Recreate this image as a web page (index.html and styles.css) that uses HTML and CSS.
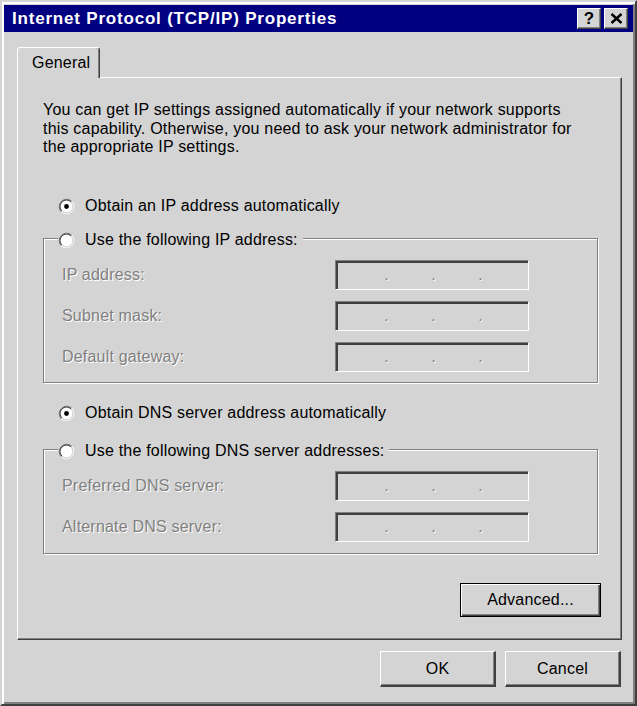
FILE: index.html
```html
<!DOCTYPE html>
<html lang="en">
<head>
<meta charset="utf-8">
<title>Internet Protocol (TCP/IP) Properties</title>
<link rel="stylesheet" href="styles.css">
</head>
<body>
<div class="window">
  <div class="titlebar">
    <span class="title">Internet Protocol (TCP/IP) Properties</span>
    <div class="caption-buttons">
      <span class="cap-btn help">?</span>
      <span class="cap-btn close"><svg width="13" height="11" viewBox="0 0 13 11"><path d="M1.5 1 L11.5 10 M11.5 1 L1.5 10" stroke="#000" stroke-width="2.4" fill="none"/></svg></span>
    </div>
  </div>

  <div class="tabs"><div class="tab">General</div></div>

  <div class="panel">
    <p class="desc">You can get IP settings assigned automatically if your network supports<br>this capability. Otherwise, you need to ask your network administrator for<br>the appropriate IP settings.</p>

    <div class="radio-row first">
      <svg class="radio" width="17" height="17" viewBox="0 0 17 17"><circle cx="8.5" cy="8.5" r="6" fill="#fff"/><path d="M3.2 13.8 A7.5 7.5 0 0 1 13.8 3.2" stroke="#808080" fill="none"/><path d="M13.8 3.2 A7.5 7.5 0 0 1 3.2 13.8" stroke="#fff" fill="none"/><path d="M3.9 13.1 A6.5 6.5 0 0 1 13.1 3.9" stroke="#404040" fill="none"/><path d="M13.1 3.9 A6.5 6.5 0 0 1 3.9 13.1" stroke="#d4d4d4" fill="none"/><circle cx="8.5" cy="8.5" r="2.4" fill="#000"/></svg>
      <span>Obtain an IP address automatically</span>
    </div>

    <fieldset class="group ip">
      <legend class="legend">
        <svg class="radio" width="17" height="17" viewBox="0 0 17 17"><circle cx="8.5" cy="8.5" r="6" fill="#fff"/><path d="M3.2 13.8 A7.5 7.5 0 0 1 13.8 3.2" stroke="#808080" fill="none"/><path d="M13.8 3.2 A7.5 7.5 0 0 1 3.2 13.8" stroke="#fff" fill="none"/><path d="M3.9 13.1 A6.5 6.5 0 0 1 13.1 3.9" stroke="#404040" fill="none"/><path d="M13.1 3.9 A6.5 6.5 0 0 1 3.9 13.1" stroke="#d4d4d4" fill="none"/></svg>
        <span>Use the following IP address:</span>
      </legend>
      <div class="fields">
        <span class="label">IP address:</span>
        <div class="ipbox"><span class="dot">.</span><span class="dot">.</span><span class="dot">.</span></div>
        <span class="label">Subnet mask:</span>
        <div class="ipbox"><span class="dot">.</span><span class="dot">.</span><span class="dot">.</span></div>
        <span class="label">Default gateway:</span>
        <div class="ipbox"><span class="dot">.</span><span class="dot">.</span><span class="dot">.</span></div>
      </div>
    </fieldset>

    <div class="radio-row second">
      <svg class="radio" width="17" height="17" viewBox="0 0 17 17"><circle cx="8.5" cy="8.5" r="6" fill="#fff"/><path d="M3.2 13.8 A7.5 7.5 0 0 1 13.8 3.2" stroke="#808080" fill="none"/><path d="M13.8 3.2 A7.5 7.5 0 0 1 3.2 13.8" stroke="#fff" fill="none"/><path d="M3.9 13.1 A6.5 6.5 0 0 1 13.1 3.9" stroke="#404040" fill="none"/><path d="M13.1 3.9 A6.5 6.5 0 0 1 3.9 13.1" stroke="#d4d4d4" fill="none"/><circle cx="8.5" cy="8.5" r="2.4" fill="#000"/></svg>
      <span>Obtain DNS server address automatically</span>
    </div>

    <fieldset class="group dns">
      <legend class="legend">
        <svg class="radio" width="17" height="17" viewBox="0 0 17 17"><circle cx="8.5" cy="8.5" r="6" fill="#fff"/><path d="M3.2 13.8 A7.5 7.5 0 0 1 13.8 3.2" stroke="#808080" fill="none"/><path d="M13.8 3.2 A7.5 7.5 0 0 1 3.2 13.8" stroke="#fff" fill="none"/><path d="M3.9 13.1 A6.5 6.5 0 0 1 13.1 3.9" stroke="#404040" fill="none"/><path d="M13.1 3.9 A6.5 6.5 0 0 1 3.9 13.1" stroke="#d4d4d4" fill="none"/></svg>
        <span>Use the following DNS server addresses:</span>
      </legend>
      <div class="fields">
        <span class="label">Preferred DNS server:</span>
        <div class="ipbox"><span class="dot">.</span><span class="dot">.</span><span class="dot">.</span></div>
        <span class="label">Alternate DNS server:</span>
        <div class="ipbox"><span class="dot">.</span><span class="dot">.</span><span class="dot">.</span></div>
      </div>
    </fieldset>

    <div class="adv-row"><button class="btn default">Advanced...</button></div>
  </div>

  <div class="footer">
    <button class="btn">OK</button>
    <button class="btn">Cancel</button>
  </div>
</div>
</body>
</html>
```

FILE: styles.css
```css
* { box-sizing: border-box; }

html, body {
  margin: 0;
  padding: 0;
  background: #d4d4d4;
}

body {
  font-family: "Liberation Sans", Arial, sans-serif;
  font-size: 16px;
  letter-spacing: 0.2px;
  color: #000;
}

.window {
  width: 637px;
  height: 706px;
  background: #d4d4d4;
  border: 2px solid;
  border-color: #d4d4d4 #404040 #404040 #d4d4d4;
  box-shadow: inset 2px 2px #fff, inset -2px -2px #808080;
  padding: 3px 2px 2px 2px;
  display: flex;
  flex-direction: column;
}

.titlebar {
  height: 27px;
  background: #000080;
  display: flex;
  align-items: center;
  justify-content: space-between;
  padding: 0 5px 0 8px;
}

.title {
  color: #fff;
  font-weight: bold;
  font-size: 17px;
  letter-spacing: 0.8px;
  white-space: nowrap;
}

.caption-buttons {
  display: flex;
  gap: 3px;
}

.cap-btn {
  width: 24px;
  height: 21px;
  background: #d4d4d4;
  border: 1px solid;
  border-color: #fff #404040 #404040 #fff;
  box-shadow: inset -1px -1px #808080;
  display: flex;
  align-items: center;
  justify-content: center;
}

.help {
  font-weight: bold;
  font-size: 17px;
  line-height: 1;
  letter-spacing: 0;
}

.tabs {
  display: flex;
  margin: 15px 0 0 13px;
  position: relative;
  z-index: 1;
}

.tab {
  height: 31px;
  margin-bottom: -1px;
  padding: 0 9px 1px 14px;
  display: flex;
  align-items: center;
  background: #d4d4d4;
  border-left: 1px solid #fff;
  border-top: 1px solid #fff;
  border-right: 1px solid #404040;
  box-shadow: inset -1px 0 #808080;
  border-radius: 3px 3px 0 0;
}

.panel {
  margin-left: 13px;
  width: 605px;
  height: 563px;
  border: 1px solid;
  border-color: #fff #404040 #404040 #fff;
  box-shadow: inset -1px -1px #808080;
  padding: 23px 20px 0 25px;
  display: flex;
  flex-direction: column;
  align-items: flex-start;
}

.desc {
  margin: 0;
  line-height: 18.5px;
  white-space: nowrap;
}

.radio-row {
  display: flex;
  align-items: center;
  gap: 10px;
  height: 19px;
  margin-left: 15px;
  white-space: nowrap;
}

.radio-row.first { margin-top: 40px; }
.radio-row.second { margin-top: 20.5px; }

.radio { flex: none; display: block; }

.group {
  width: 555px;
  min-width: 0;
  margin: 0;
  border: 1px solid #808080;
  box-shadow: inset 1px 1px #fff, 1px 1px #fff;
  padding: 10.5px 0 10px 18px;
}

.group.ip { margin-top: 11px; }
.group.dns { margin-top: 15px; padding-bottom: 11px; }

.legend {
  display: flex;
  align-items: center;
  gap: 10px;
  height: 23px;
  padding: 4px 5px 0 0;
  margin-left: -4px;
  background: #d4d4d4;
  white-space: nowrap;
}

.fields {
  display: grid;
  grid-template-columns: 273px 194px;
  grid-auto-rows: 30px;
  row-gap: 11px;
  align-items: center;
}

.label {
  color: #808080;
  text-shadow: 1px 1px 0 #fff;
  white-space: nowrap;
}

.ipbox {
  height: 30px;
  border: 1px solid;
  border-color: #808080 #fff #fff #808080;
  box-shadow: inset 2px 2px #404040;
  display: flex;
  padding-left: 27px;
}

.dot {
  width: 47px;
  text-align: center;
  color: #808080;
  line-height: 27px;
  letter-spacing: 0;
  text-shadow: 1px 1px 0 #fff;
}

.adv-row {
  align-self: stretch;
  display: flex;
  justify-content: flex-end;
  margin-top: 29px;
}

.btn {
  font: inherit;
  letter-spacing: inherit;
  color: #000;
  background: #d4d4d4;
  padding: 0;
  border-style: solid;
  border-width: 1px 2px 2px 1px;
  border-color: #fff #404040 #404040 #fff;
  box-shadow: inset -1px -1px #808080;
}

.btn.default {
  width: 141px;
  height: 34px;
  border: 1px solid #000;
  box-shadow: inset 1px 1px #fff, inset -1px -1px #404040, inset -2px -2px #808080;
}

.footer {
  display: flex;
  justify-content: flex-end;
  gap: 9px;
  margin-top: 11px;
  padding-right: 12px;
}

.footer .btn {
  width: 116px;
  height: 36px;
}
```
